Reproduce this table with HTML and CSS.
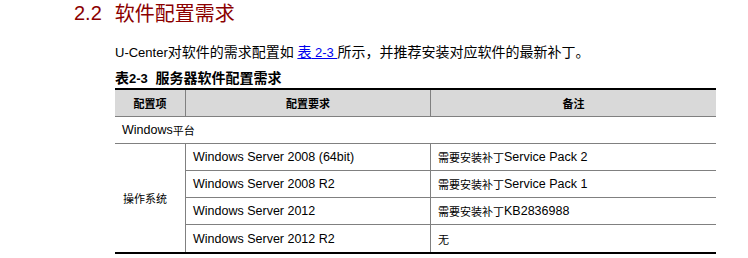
FILE: index.html
```html
<!DOCTYPE html>
<html lang="zh-CN">
<head>
<meta charset="utf-8">
<title>2.2 软件配置需求</title>
<link rel="stylesheet" href="styles.css">
</head>
<body>
<div class="page">
  <h2 class="section-title"><span class="num">2.2</span><span class="zh">软件配置需求</span></h2>
  <div class="content">
    <p class="intro">U-Center<span class="zh">对软件的需求配置如</span> <a class="xref" href="#t23"><span class="zh">表</span> 2-3 </a><span class="zh">所示，并推荐安装对应软件的最新补丁。</span></p>
    <p class="caption" id="t23"><span class="zh">表</span>2-3 <span class="zh cap-title">服务器软件配置需求</span></p>
    <div class="spec" role="table">
      <div class="cell head" role="columnheader"><span class="zh">配置项</span></div>
      <div class="cell head" role="columnheader"><span class="zh">配置要求</span></div>
      <div class="cell head last-col" role="columnheader"><span class="zh">备注</span></div>

      <div class="cell group" role="cell">Windows<span class="zh">平台</span></div>

      <div class="cell item" role="rowheader"><span class="zh">操作系统</span></div>
      <div class="cell" role="cell">Windows Server 2008 (64bit)</div>
      <div class="cell last-col" role="cell"><span class="zh">需要安装补丁</span>Service Pack 2</div>

      <div class="cell" role="cell">Windows Server 2008 R2</div>
      <div class="cell last-col" role="cell"><span class="zh">需要安装补丁</span>Service Pack 1</div>

      <div class="cell" role="cell">Windows Server 2012</div>
      <div class="cell last-col" role="cell"><span class="zh">需要安装补丁</span>KB2836988</div>

      <div class="cell last-row" role="cell">Windows Server 2012 R2</div>
      <div class="cell last-col last-row" role="cell"><span class="zh">无</span></div>
    </div>
  </div>
</div>
</body>
</html>
```
FILE: styles.css
```css
html, body {
  margin: 0;
  padding: 0;
  background: #ffffff;
}
body {
  font-family: "Liberation Sans", Arial, "Noto Sans CJK SC", sans-serif;
  color: #000;
}
.zh {
  font-family: "Noto Sans CJK SC", sans-serif;
}
.page {
  padding-left: 74px;
  padding-top: 1px;
}
.section-title {
  margin: 0;
  font-size: 20px;
  line-height: 24px;
  font-weight: normal;
  color: #8b0000;
  display: flex;
  gap: 13px;
}
.section-title .zh {
  font-size: 20px;
  line-height: 24px;
}
.content {
  padding-left: 41px;
}
.intro {
  margin: 17px 0 0;
  font-size: 13px;
  line-height: 18px;
  height: 18px;
}
.intro .zh {
  font-size: 14px;
}
.xref {
  color: #0000ee;
  text-decoration: underline;
}
.caption {
  margin: 8px 0 0;
  font-size: 13px;
  line-height: 18px;
  height: 18px;
  font-weight: bold;
}
.caption .zh {
  font-size: 14px;
  font-weight: bold;
}
.caption .cap-title {
  margin-left: 4px;
}
.spec {
  margin-top: 2px;
  width: 601px;
  display: grid;
  grid-template-columns: 71px 245px 285px;
  grid-auto-rows: 27px;
  border-top: 2px solid #000;
  border-bottom: 2px solid #000;
  font-size: 12.5px;
}
.spec .zh {
  font-size: 11px;
}
.cell {
  box-sizing: border-box;
  height: 27px;
  display: flex;
  align-items: center;
  padding: 0 7px;
  border-bottom: 1px solid #808080;
  border-right: 1px solid #808080;
  line-height: 16px;
  white-space: nowrap;
}
.cell.last-col {
  border-right: none;
}
.cell.last-row {
  border-bottom: none;
}
.cell.head {
  background: #d9d9d9;
  justify-content: center;
  font-weight: bold;
}
.cell.group {
  grid-column: 1 / 4;
  border-right: none;
}
.cell.item {
  grid-row: span 4;
  height: auto;
  padding-left: 8px;
  border-bottom: none;
}
```
